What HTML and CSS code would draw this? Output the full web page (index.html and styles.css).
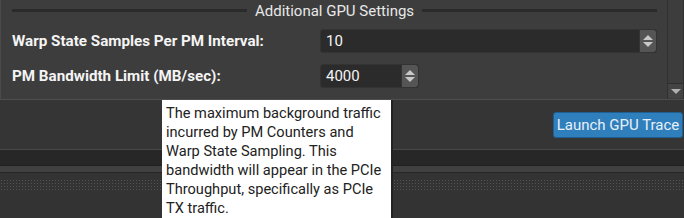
FILE: index.html
```html
<!DOCTYPE html>
<html lang="en">
<head>
    <meta charset="UTF-8">
    <title>GPU Trace</title>
    <link rel="stylesheet" href="styles.css">
</head>
<body>
    <div class="settings">
        <div class="settings-body">
            <div class="group-title">
                <span class="rule"></span>
                <span class="group-name">Additional GPU Settings</span>
                <span class="rule"></span>
            </div>
            <div class="field">
                <label>Warp State Samples Per PM Interval:</label>
                <div class="spinbox wide">
                    <span class="value">10</span>
                    <span class="spin"><i class="up"></i><i class="down"></i></span>
                </div>
            </div>
            <div class="field">
                <label>PM Bandwidth Limit (MB/sec):</label>
                <div class="spinbox narrow">
                    <span class="value">4000</span>
                    <span class="spin"><i class="up"></i><i class="down"></i></span>
                </div>
            </div>
        </div>
        <div class="scrollbar">
            <div class="scroll-down"><i></i></div>
        </div>
    </div>

    <div class="actions">
        <button class="launch">Launch GPU Trace</button>
    </div>

    <div class="band-dark"></div>
    <div class="band-light"></div>
    <div class="dots"></div>

    <div class="tooltip">
        The maximum background traffic incurred by PM Counters and Warp State Sampling. This bandwidth will appear in the PCIe Throughput, specifically as PCIe TX traffic.
    </div>
</body>
</html>
```

FILE: styles.css
```css
body {
    margin: 0;
    width: 684px;
    height: 218px;
    overflow: hidden;
    background: #333333;
    font-family: Roboto, "Liberation Sans", sans-serif;
    color: #f0f0f0;
    position: relative;
}

.settings {
    display: flex;
    height: 99px;
    background: #3d3d3d;
    border-left: 1px solid #4a4a4a;
    border-bottom: 1px solid #4e4e4e;
}

.settings-body {
    flex: 1;
    padding: 0 10px 0 11px;
}

.group-title {
    display: flex;
    align-items: center;
    height: 21px;
    gap: 8px;
}

.rule {
    flex: 1;
    height: 3px;
    background: #2b2b2b;
}

.group-name {
    font-size: 15px;
    color: #e8e8e8;
}

.field {
    display: flex;
    align-items: center;
    height: 24px;
    margin-top: 11px;
}

.group-title + .field {
    margin-top: 8px;
}

label {
    width: 308px;
    font-weight: bold;
    font-size: 15.2px;
    color: #f4f4f4;
}

.spinbox {
    display: flex;
    height: 24px;
    background: #2b2b2b;
    border: 1px solid #333;
    border-radius: 3px;
    box-sizing: border-box;
}

.spinbox.wide { flex: 1; }
.spinbox.narrow { width: 99px; }

.value {
    flex: 1;
    padding-left: 5px;
    font-size: 15px;
    line-height: 22px;
    color: #f4f4f4;
}

.spin {
    width: 16px;
    background: #555555;
    border-left: 1px solid #333;
    border-radius: 0 3px 3px 0;
    display: flex;
    flex-direction: column;
    align-items: center;
    justify-content: center;
    gap: 2px;
}

.spin i {
    width: 0;
    height: 0;
    border-left: 5px solid transparent;
    border-right: 5px solid transparent;
}

.spin .up { border-bottom: 5px solid #c8c8c8; }
.spin .down { border-top: 5px solid #c8c8c8; }

.scrollbar {
    width: 15px;
    border-left: 1px solid #303030;
    border-right: 1px solid #303030;
    display: flex;
    flex-direction: column;
    justify-content: flex-end;
    padding-bottom: 1px;
}

.scroll-down {
    height: 14px;
    background: #444;
    border-top: 1px solid #2e2e2e;
    display: flex;
    align-items: center;
    justify-content: center;
}

.scroll-down i {
    width: 0;
    height: 0;
    border-left: 5px solid transparent;
    border-right: 5px solid transparent;
    border-top: 5px solid #b0b0b0;
}

.actions {
    height: 50px;
    display: flex;
    justify-content: flex-end;
    align-items: flex-start;
    padding: 12px 1px 0 0;
    box-sizing: border-box;
    background: #353535;
    border-bottom: 1px solid #484848;
}

.launch {
    width: 130px;
    height: 26px;
    padding: 0;
    background: #2f7fbd;
    border: 1px solid #1f5f92;
    border-radius: 3px;
    color: #e8f0f8;
    font-family: Roboto, "Liberation Sans", sans-serif;
    font-size: 15px;
}

.band-dark {
    height: 15px;
    background: #272727;
    border-bottom: 1px solid #202020;
}

.band-light {
    height: 6px;
    background: #404040;
    border-bottom: 1px solid #262626;
}

.dots {
    height: 11px;
    margin-top: 6px;
    background-image: radial-gradient(#555 0.6px, transparent 0.8px);
    background-size: 3px 3px;
}

.tooltip {
    position: absolute;
    left: 162px;
    top: 100px;
    width: 221px;
    height: 110px;
    padding: 4px 4px;
    background: #ffffff;
    border-right: 2px solid #222;
    color: #222;
    font-size: 14.6px;
    line-height: 19px;
}
```
